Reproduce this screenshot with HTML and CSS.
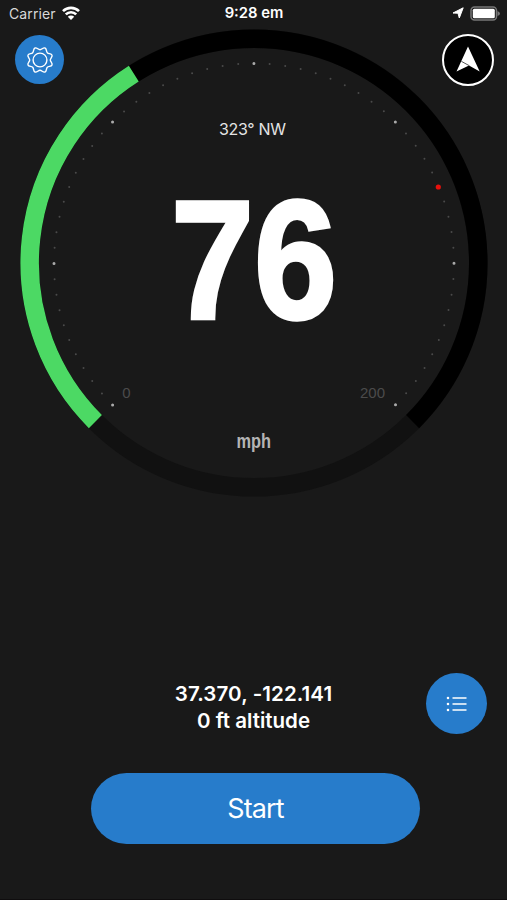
FILE: index.html
```html
<!DOCTYPE html>
<html lang="en">
  <head>
    <meta charset="utf-8" />
    <title>Speedometer</title>
    <link rel="stylesheet" href="styles.css" />
  </head>
  <body>
    <div class="screen">
      <header class="status-bar">
        <div class="status-left">
          <span class="carrier">Carrier</span>
          <svg class="wifi" width="18" height="14" viewBox="0 0 18 14">
            <path d="M1 5.200a11.300 11.300 0 0 1 16 0M3.800 8.400a7.300 7.300 0 0 1 10.400 0" />
            <path class="solid" d="M9 14l-3.200-3.300a4.600 4.600 0 0 1 6.400 0z" />
          </svg>
        </div>
        <span class="clock">9:28 em</span>
        <div class="status-right">
          <svg class="location" width="12" height="12" viewBox="0 0 12 12">
            <path d="M11.200.800L7.300 11 6 6.200 1 6z" />
          </svg>
          <svg class="battery" width="31" height="15" viewBox="0 0 31 15">
            <rect class="case" x="1" y="1" width="25.500" height="13" rx="3.500" />
            <rect class="charge" x="2.800" y="2.800" width="22" height="9.400" rx="1.500" />
            <path class="tip" d="M27.500 5q2.500 1 2.500 2.500t-2.500 2.500z" />
          </svg>
        </div>
      </header>

      <main class="gauge-area">
        <svg class="gauge" width="507" height="472" viewBox="0 28 507 472">
          <circle class="ring" cx="254" cy="263" r="224.300" />
          <path class="track" d="M95.400 421.600A224.300 224.300 0 1 1 412.600 421.600" />
          <path class="speed-arc" d="M95.400 421.600A224.300 224.300 0 0 1 133.800 73.600" />
          <path class="ticks" pathLength="60.010" d="M112.600 404.900A200 200 0 1 1 395.400 404.900" />
          <path class="ticks-major" pathLength="6.001" d="M112.600 404.900A200 200 0 1 1 395.400 404.900" />
          <circle class="heading-dot" cx="438.300" cy="187" r="2.600" />
          <text class="heading" x="252.500" y="135" textLength="67">323° NW</text>
          <text class="speed" x="171" y="318.300" textLength="166" lengthAdjust="spacingAndGlyphs">76</text>
          <text class="limit" x="126.500" y="398">0</text>
          <text class="limit" x="372.500" y="398">200</text>
          <text class="unit" x="236.500" y="447.500" textLength="34.500" lengthAdjust="spacingAndGlyphs">mph</text>
        </svg>

        <button class="round-button settings" aria-label="Settings">
          <svg width="28" height="28" viewBox="-14 -14 28 28">
            <path id="teeth" d="M0-10.300C1.800-10.300 3.200-12.800 5-12C6.800-11.300 6-8.600 7.300-7.300C8.600-6 11.300-6.800 12-5C12.800-3.200 10.300-1.800 10.300 0" />
            <use href="#teeth" transform="rotate(90)" />
            <use href="#teeth" transform="rotate(180)" />
            <use href="#teeth" transform="rotate(270)" />
            <circle r="6.900" />
          </svg>
        </button>
        <button class="round-button compass" aria-label="Compass">
          <svg width="24" height="28" viewBox="0 0 24 28">
            <path d="M12 .5L23.700 25.500 13 19.500.5 25.500z" />
            <path class="fold" d="M5.300 15.300l8 4.400" />
          </svg>
        </button>
      </main>

      <section class="position">
        <div class="coords">
          <div class="latlng">37.370, -122.141</div>
          <div class="altitude">0 ft altitude</div>
        </div>
        <button class="round-button trips" aria-label="Trips">
          <svg width="22" height="16" viewBox="0 0 22 16">
            <path d="M6.500 2h14M6.500 8h14M6.500 14h14" />
            <path class="bullets" d="M2 2h0M2 8h0M2 14h0" />
          </svg>
        </button>
      </section>

      <button class="start">Start</button>
    </div>
  </body>
</html>
```

FILE: styles.css
```css
body {
  margin: 0;
  background: #191919;
  color: #fff;
  font-family: Inter, 'Liberation Sans', sans-serif;
}
button {
  border: none;
  padding: 0;
  color: #fff;
  font-family: inherit;
}
.screen {
  display: flex;
  flex-direction: column;
  box-sizing: border-box;
  width: 507px;
  height: 900px;
  overflow: hidden;
  border-bottom: 1px solid #0f0d0e;
}
.status-bar {
  display: grid;
  grid-template-columns: 1fr auto 1fr;
  align-items: center;
  box-sizing: border-box;
  height: 28px;
  padding: 0 6px 2px 9px;
  font-size: 14px;
}
.status-left,
.status-right {
  display: flex;
  align-items: center;
  gap: 6px;
}
.status-right {
  justify-content: flex-end;
}
.carrier {
  color: #d8d8d8;
  letter-spacing: 0.1px;
}
.clock {
  margin-right: 2px;
  font-size: 14.8px;
  font-weight: 600;
}
.wifi {
  fill: none;
  stroke: #fff;
  stroke-width: 2.6;
}
.wifi .solid {
  fill: #fff;
  stroke: none;
}
.location {
  fill: #fff;
  stroke: #fff;
  stroke-linejoin: round;
}
.battery .case {
  fill: none;
  stroke: #777;
  stroke-width: 1.5;
}
.battery .charge {
  fill: #fff;
}
.battery .tip {
  fill: #777;
}

/* Gauge */
.gauge-area {
  position: relative;
  height: 472px;
}
.gauge {
  display: block;
}
.gauge circle,
.gauge path {
  fill: none;
}
.ring {
  stroke: #111;
  stroke-width: 18.5;
}
.track {
  stroke: #000;
  stroke-width: 18.5;
}
.speed-arc {
  stroke: #4cd964;
  stroke-width: 18.5;
}
.ticks,
.ticks-major {
  stroke: #4a4a4a;
  stroke-width: 2;
  stroke-linecap: round;
  stroke-dasharray: 0 1;
}
.ticks-major {
  stroke: #aaa;
  stroke-width: 3;
}
.gauge .heading-dot {
  fill: #e8100c;
}
.gauge text {
  fill: #fff;
}
.gauge .heading {
  font-size: 16px;
  text-anchor: middle;
  fill: #e4e4e4;
}
.gauge .speed {
  font-family: 'Liberation Sans', sans-serif;
  font-size: 168px;
  font-weight: bold;
  stroke: #fff;
  stroke-width: 3.5;
}
.gauge .limit {
  font-family: 'Liberation Sans', sans-serif;
  font-size: 15px;
  text-anchor: middle;
  fill: #4b4b4b;
}
.gauge .unit {
  font-family: 'Liberation Sans', sans-serif;
  font-size: 20px;
  font-weight: bold;
  fill: #b4b4b4;
}

/* Buttons */
.round-button {
  display: flex;
  align-items: center;
  justify-content: center;
  box-sizing: border-box;
  border-radius: 50%;
  background: #277ccb;
}
.round-button svg {
  fill: none;
  stroke: #fff;
  stroke-width: 1.4;
  stroke-linejoin: round;
}
.settings {
  position: absolute;
  top: 7px;
  left: 15.4px;
  width: 49px;
  height: 49px;
}
.compass {
  position: absolute;
  top: 6px;
  right: 13px;
  width: 52px;
  height: 52px;
  border: 2.5px solid #fff;
  background: #000;
}
.compass svg {
  fill: #fff;
  stroke: none;
}
.compass .fold {
  stroke: #555;
  stroke-width: 1;
}
.position {
  display: grid;
  grid-template-columns: 1fr auto 1fr;
  align-items: center;
  height: 61px;
  margin-top: 173px;
  padding: 0 20px;
}
.coords {
  grid-column: 2;
  padding-top: 7px;
  font-size: 20.5px;
  font-weight: 600;
  line-height: 27px;
  text-align: center;
}
.latlng {
  letter-spacing: 0.1px;
}
.trips {
  justify-self: end;
  width: 61px;
  height: 61px;
}
.trips .bullets {
  stroke-width: 2.6;
  stroke-linecap: round;
}
.start {
  align-self: center;
  width: 329px;
  height: 71px;
  margin: 39px 0 0 4px;
  border-radius: 36px;
  background: #277ccb;
  font-size: 27px;
  letter-spacing: -0.9px;
}
```
